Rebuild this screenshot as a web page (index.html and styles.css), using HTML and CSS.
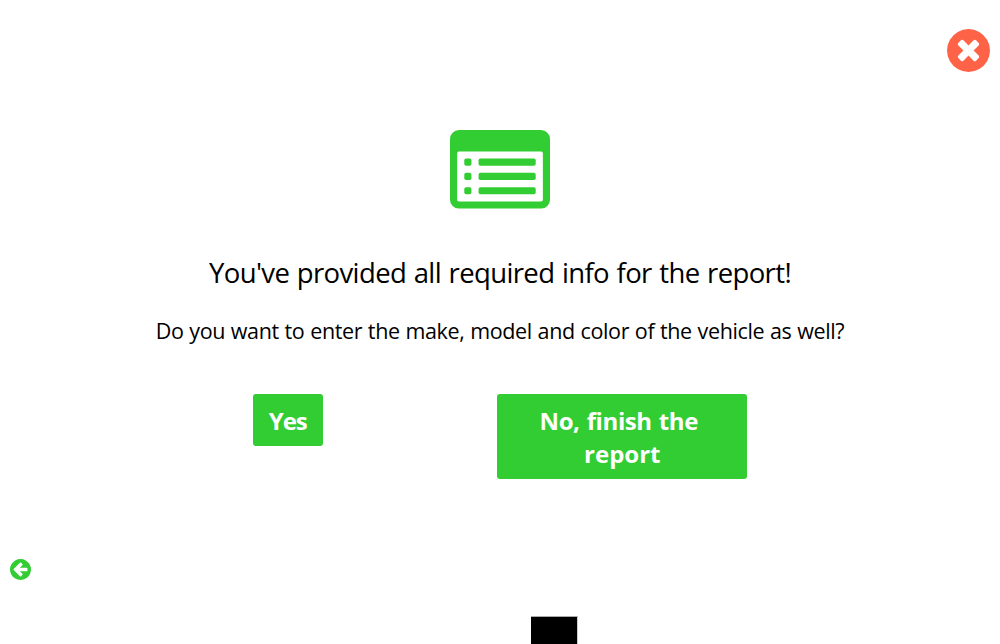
FILE: index.html
```html
<!DOCTYPE html>
<html lang="en">
<head>
<meta charset="utf-8">
<title>Report</title>
<link rel="stylesheet" href="styles.css">
</head>
<body>
<main class="page">
  <header class="top">
    <svg class="close" viewBox="128 128 1536 1536" role="img" aria-label="Close"><path d="M1277 1122q0-26-19-45l-181-181 181-181q19-19 19-45 0-27-19-46l-90-90q-19-19-46-19-26 0-45 19l-181 181-181-181q-19-19-45-19-27 0-46 19l-90 90q-19 19-19 46 0 26 19 45l181 181-181 181q-19 19-19 45 0 27 19 46l90 90q19 19 46 19 26 0 45-19l181-181 181 181q19 19 45 19 27 0 46-19l90-90q19-19 19-46zm387-226q0 209-103 385.5t-279.5 279.5-385.5 103-385.5-103-279.5-279.5-103-385.5 103-385.5 279.5-279.5 385.5-103 385.5 103 279.5 279.5 103 385.5z"/></svg>
  </header>
  <section class="content">
    <svg class="list" viewBox="0 0 1792 1408" aria-hidden="true">
      <path fill-rule="evenodd" d="M160 0H1632Q1698 0 1745 47T1792 160V1248Q1792 1314 1745 1361T1632 1408H160Q94 1408 47 1361T0 1248V160Q0 94 47 47T160 0ZM160 384Q128 384 128 416V1248Q128 1280 160 1280H1632Q1664 1280 1664 1248V416Q1664 384 1632 384Z"/>
      <g>
        <rect x="256" y="512" width="128" height="128" rx="32"/><rect x="512" y="512" width="1024" height="128" rx="32"/>
        <rect x="256" y="768" width="128" height="128" rx="32"/><rect x="512" y="768" width="1024" height="128" rx="32"/>
        <rect x="256" y="1024" width="128" height="128" rx="32"/><rect x="512" y="1024" width="1024" height="128" rx="32"/>
      </g>
    </svg>
    <h1 class="title">You've provided all required info for the report!</h1>
    <p class="question">Do you want to enter the make, model and color of the vehicle as well?</p>
    <div class="actions">
      <button class="btn yes">Yes</button>
      <button class="btn finish"><span class="lead">No, finish the</span><br><span>report</span></button>
    </div>
  </section>
  <footer class="bottom">
    <svg class="back" viewBox="128 128 1536 1536" role="img" aria-label="Back"><path d="M1408 960v-128q0-26-19-45t-45-19h-502l189-189q19-19 19-45t-19-45l-91-91q-18-18-45-18t-45 18l-362 362-91 91q-18 18-18 45t18 45l91 91 362 362q18 18 45 18t45-18l91-91q18-18 18-45t-18-45l-189-189h502q26 0 45-19t19-45zm256-64q0 209-103 385.5t-279.5 279.5-385.5 103-385.5-103-279.5-279.5-103-385.5 103-385.5 279.5-279.5 385.5-103 385.5 103 279.5 279.5 103 385.5z"/></svg>
    <div class="block"></div>
  </footer>
</main>
</body>
</html>
```
FILE: styles.css
```css
body {
  margin: 0;
  background: #fff;
  color: #000;
  font-family: "Segoe UI", "Open Sans", "Noto Sans", sans-serif;
}
.page {
  height: 644px;
  display: flex;
  flex-direction: column;
  overflow: hidden;
}
.top {
  height: 101px;
  padding: 29px 10px 0 0;
  display: flex;
  justify-content: flex-end;
  flex: none;
}
.close { width: 43px; height: 43px; fill: #ff6347; }
.content {
  display: flex;
  flex-direction: column;
  align-items: center;
  height: 428px;
  flex: none;
}
.list { width: 100px; height: 78.6px; fill: #32cd32; flex: none; }
.title {
  margin: 44.4px 0 0;
  font-size: 27.5px;
  font-weight: 400;
  line-height: 40px;
  letter-spacing: -0.62px;
  word-spacing: 1px;
  white-space: nowrap;
}
.question {
  margin: 23px 0 0;
  font-size: 21.5px;
  line-height: 30px;
  letter-spacing: -0.36px;
  word-spacing: 0.5px;
  white-space: nowrap;
}
.actions {
  width: 494.6px;
  margin-top: 48px;
  display: flex;
  justify-content: space-between;
  align-items: flex-start;
}
.btn {
  border: 0;
  border-radius: 3px;
  padding: 10px 0 9px;
  background: #32cd32;
  color: #fff;
  font: inherit;
  font-size: 24px;
  font-weight: 700;
  line-height: 33px;
}
.yes { width: 70px; height: 52px; letter-spacing: -1px; }
.finish { width: 250px; height: 84.6px; }
.lead { padding-right: 7px; letter-spacing: -0.4px; word-spacing: 1.3px; }
.bottom { display: flex; align-items: flex-start; flex: none; }
.back { width: 21px; height: 21px; margin: 0.5px 0 0 10px; fill: #32cd32; }
.block {
  width: 46px;
  height: 28px;
  margin: 58px 0 0 500px;
  border-top: 1px solid #aaa;
  border-right: 1px solid #ccc;
  background: #000;
}
```
